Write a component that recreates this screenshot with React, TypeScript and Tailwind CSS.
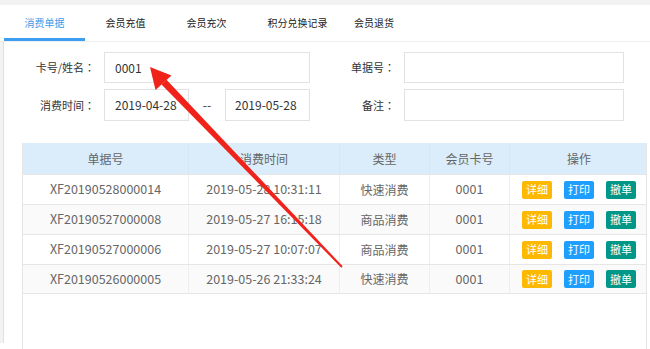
import React from "react";

const tabs = [
  { label: "消费单据", w: "w-[81px]", active: true },
  { label: "会员充值", w: "w-[81px]" },
  { label: "会员充次", w: "w-[81px]" },
  { label: "积分兑换记录", w: "w-[101px]" },
  { label: "会员退货", w: "w-[52px]" },
];

const rows = [
  ["XF20190528000014", "2019-05-28 10:31:11", "快速消费", "0001"],
  ["XF20190527000008", "2019-05-27 16:15:18", "商品消费", "0001"],
  ["XF20190527000006", "2019-05-27 10:07:07", "商品消费", "0001"],
  ["XF20190526000005", "2019-05-26 21:33:24", "快速消费", "0001"],
];

const cols = "grid grid-cols-[165px_151px_90px_80px_139px]";

function Label({ text, w }: { text: string; w: string }) {
  return (
    <div className={`${w} text-right text-[11px] text-[#333]`}>
      {text}
      <span style={{ fontFamily: '"Noto Sans CJK JP", sans-serif' }}>：</span>
    </div>
  );
}

export default function App() {
  return (
    <div
      className="relative w-[650px] h-[349px] overflow-hidden bg-white text-[#333]"
      style={{ fontFamily: '"Noto Sans CJK SC", "Liberation Sans", sans-serif' }}
    >
      <div className="h-[5px] bg-[#f2f2f2]" />
      <div className="flex h-[37px] pl-[4px] border-b border-[#eeeeee]">
        {tabs.map((t) => (
          <div
            key={t.label}
            className={
              t.active
                ? `${t.w} flex items-center justify-center text-[10px] text-[#3b9be8] border-b-[3px] border-[#3d9df0] pt-[2px]`
                : `${t.w} flex items-center justify-center text-[10px] text-[#222] pb-[1px]`
            }
          >
            {t.label}
          </div>
        ))}
      </div>
      <div className="flex h-[307px]">
        <div className="w-[4px] h-[301px] bg-[#f3f3f3] border-r border-[#e0e0e0]" />
        <div className="flex-1 flex flex-col">
          <div className="pt-[10px] flex flex-col gap-[6px]">
            <div className="flex items-center h-[31px]">
              <Label text="卡号/姓名" w="w-[91px]" />
              <div className="ml-[9px] w-[206px] h-[31px] border border-[#e2e2e2] flex items-center px-[10px] text-[12px] text-[#333]">
                0001
              </div>
              <Label text="单据号" w="w-[85px]" />
              <div className="ml-[9px] w-[220px] h-[31px] border border-[#e2e2e2]" />
            </div>
            <div className="flex items-center h-[32px]">
              <Label text="消费时间" w="w-[91px]" />
              <div className="ml-[9px] w-[85px] h-[32px] border border-[#e2e2e2] flex items-center px-[10px] text-[12px] text-[#333]">
                2019-04-28
              </div>
              <div className="w-[36px] text-center text-[12px] text-[#333]">--</div>
              <div className="w-[85px] h-[32px] border border-[#e2e2e2] flex items-center px-[9px] text-[12px] text-[#333]">
                2019-05-28
              </div>
              <Label text="备注" w="w-[85px]" />
              <div className="ml-[9px] w-[220px] h-[32px] border border-[#e2e2e2]" />
            </div>
          </div>
          <div className="mt-[22px] ml-[18px] w-[625px] flex-1 border-l border-r border-[#e6e6e6] flex flex-col">
            <div className={`${cols} h-[31px] bg-[#dbedfa] text-[12px] text-[#666]`}>
              {["单据号", "消费时间", "类型", "会员卡号", "操作"].map((h, i) => (
                <div
                  key={h}
                  className={`flex items-center justify-center ${i > 0 ? "border-l border-[#d8e7f2]" : ""}`}
                >
                  {h}
                </div>
              ))}
            </div>
            {rows.map((r, ri) => (
              <div
                key={r[0]}
                className={`${cols} h-[30px] border-t border-[#e6e6e6] text-[12.5px] text-[#666] ${
                  ri % 2 === 1 ? "bg-[#fafafa]" : "bg-white"
                } ${ri === rows.length - 1 ? "border-b" : ""}`}
              >
                {r.map((c, ci) => (
                  <div
                    key={ci}
                    className={`flex items-center justify-center ${ci > 0 ? "border-l border-[#eeeeee]" : ""} ${
                      ci === 2 ? "text-[12px]" : ""
                    }`}
                  >
                    {c}
                  </div>
                ))}
                <div className="flex items-center justify-center gap-[12px] border-l border-[#eeeeee]">
                  <span className="w-[30px] h-[18px] rounded-[2px] bg-[#ffb800] text-white text-[11px] flex items-center justify-center">
                    详细
                  </span>
                  <span className="w-[30px] h-[18px] rounded-[2px] bg-[#1e9fff] text-white text-[11px] flex items-center justify-center">
                    打印
                  </span>
                  <span className="w-[30px] h-[18px] rounded-[2px] bg-[#009688] text-white text-[11px] flex items-center justify-center">
                    撤单
                  </span>
                </div>
              </div>
            ))}
          </div>
        </div>
      </div>
      <svg
        className="absolute inset-0 pointer-events-none"
        width="650"
        height="349"
        viewBox="0 0 650 349"
      >
        <polygon points="161.5,84.5 166.5,79.7 342.7,266.3 341.3,267.7" fill="#f0231b" />
        <polygon points="150,67 171.5,75.5 155.5,90" fill="#f0231b" />
      </svg>
    </div>
  );
}
